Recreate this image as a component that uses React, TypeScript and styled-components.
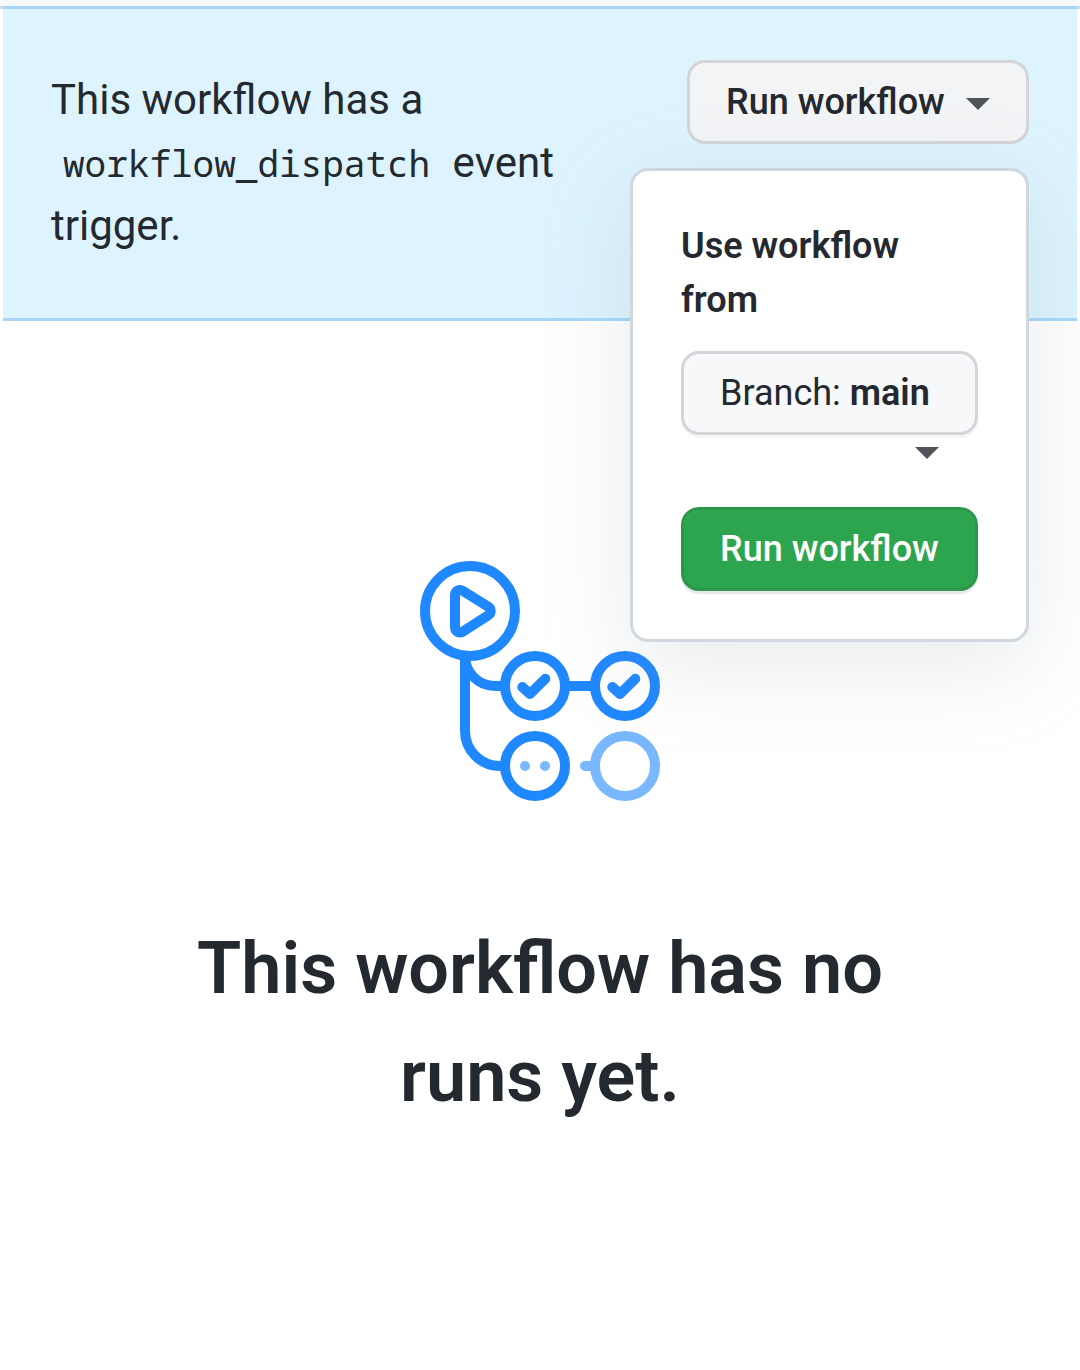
import React from "react";
import styled, { createGlobalStyle } from "styled-components";

const GlobalStyle = createGlobalStyle`
  *, *::before, *::after { box-sizing: border-box; }
  body {
    margin: 0;
    background: #ffffff;
    color: #24292f;
    font-family: Roboto, "Liberation Sans", sans-serif;
  }
`;

const Page = styled.div`
  min-height: 1370px;
  padding-top: 6px;
  background: linear-gradient(#f6f8fa 6px, #d0d7de 6px, #d0d7de 9px, #ffffff 9px);
`;

const Banner = styled.section`
  display: flex;
  justify-content: space-between;
  align-items: flex-start;
  height: 315px;
  margin: 0 3px;
  padding: 51px 48px 0;
  background: #ddf4ff;
  border: solid #a9d6f8;
  border-width: 3px 0;
`;

const Message = styled.p`
  width: 520px;
  margin: 8px 0 0;
  font-size: 42px;
  line-height: 63px;
`;

const Code = styled.code`
  display: inline-block;
  padding: 0 12px;
  font-family: "Noto Sans Mono", "Droid Sans Mono", "DejaVu Sans Mono", monospace;
  font-size: 36px;
  line-height: 1;
`;

const Dropdown = styled.div`
  position: relative;
  width: 342px;
`;

const Button = styled.button<{ $variant: "trigger" | "select" | "primary" }>`
  display: flex;
  align-items: center;
  width: 100%;
  height: 84px;
  padding: 0 36px;
  border: 3px solid ${(p) => (p.$variant === "primary" ? "#2c974b" : "#d3d5d8")};
  border-radius: 18px;
  background: ${(p) =>
    ({ trigger: "#f3f4f6", select: "#f6f8fa", primary: "#2da44e" })[p.$variant]};
  box-shadow: ${(p) =>
    ({
      trigger: "none",
      select: "0 3px 0 rgba(27, 31, 36, 0.04), inset 0 3px 0 rgba(255, 255, 255, 0.25)",
      primary: "0 3px 0 rgba(27, 31, 36, 0.1), inset 0 3px 0 rgba(255, 255, 255, 0.03)",
    })[p.$variant]};
  color: ${(p) => (p.$variant === "primary" ? "#ffffff" : "#24292f")};
  font: ${(p) => (p.$variant === "select" ? 400 : 500)} 36px/60px Roboto, "Liberation Sans", sans-serif;
  white-space: pre;
`;

const Strong = styled.span`
  font-weight: 600;
`;

const Caret = styled.span`
  width: 0;
  height: 0;
  border: 12px solid transparent;
  border-top-color: #505459;
  border-bottom-width: 0;
`;

const TriggerCaret = styled(Caret)`
  margin: 4px 0 0 auto;
`;

const Popover = styled.div`
  position: absolute;
  top: 108px;
  right: 0;
  z-index: 1;
  display: flex;
  flex-direction: column;
  width: 399px;
  padding: 48px;
  border: 3px solid #d0d7de;
  border-radius: 18px;
  background: #ffffff;
  box-shadow: 0 24px 92px rgba(140, 149, 159, 0.2);
`;

const Label = styled.p`
  margin: 0 0 24px;
  font-size: 36px;
  font-weight: 600;
  line-height: 54px;
`;

const BranchCaret = styled(Caret)`
  margin: 12px 0 48px 234px;
`;

const Blankslate = styled.main`
  display: flex;
  flex-direction: column;
  align-items: center;
  padding-top: 240px;
`;

const Heading = styled.h3`
  width: 760px;
  margin: 114px 0 0;
  font-size: 72px;
  font-weight: 600;
  line-height: 108px;
  text-align: center;
`;

const WorkflowIcon = () => (
  <svg width="240" height="240" viewBox="0 0 240 240" fill="none" stroke="#2088ff" strokeWidth="10">
    <path d="M45 95V170A35 35 0 0 0 80 205H85" />
    <path d="M45 95A30 30 0 0 0 75 125H85" />
    <path d="M145 125H175" />
    <path d="M165 205H175" stroke="#79b8ff" strokeLinecap="round" />
    <circle cx="50" cy="50" r="45" />
    <path d="M35 34A5 5 0 0 1 42.6 29.8L68.3 45.8A5 5 0 0 1 68.3 54.3L42.6 70.7A5 5 0 0 1 35 66.5Z" />
    <circle cx="115" cy="125" r="30" />
    <circle cx="205" cy="125" r="30" />
    <circle cx="115" cy="205" r="30" />
    <circle cx="205" cy="205" r="30" stroke="#79b8ff" />
    <g strokeLinecap="round" strokeLinejoin="round">
      <path d="M102.3 126L110 133L125.3 117.7" />
      <path d="M192.3 126L200 133L215.3 117.7" />
    </g>
    <g fill="#79b8ff" stroke="none">
      <circle cx="105" cy="205" r="5" />
      <circle cx="125" cy="205" r="5" />
    </g>
  </svg>
);

export default function App() {
  return (
    <>
      <GlobalStyle />
      <Page>
        <Banner>
          <Message>
            This workflow has a <Code>workflow_dispatch</Code> event trigger.
          </Message>
          <Dropdown>
            <Button $variant="trigger">
              Run workflow
              <TriggerCaret />
            </Button>
            <Popover>
              <Label>Use workflow from</Label>
              <Button $variant="select">
                Branch: <Strong>main</Strong>
              </Button>
              <BranchCaret />
              <Button $variant="primary">Run workflow</Button>
            </Popover>
          </Dropdown>
        </Banner>
        <Blankslate>
          <WorkflowIcon />
          <Heading>This workflow has no runs yet.</Heading>
        </Blankslate>
      </Page>
    </>
  );
}
